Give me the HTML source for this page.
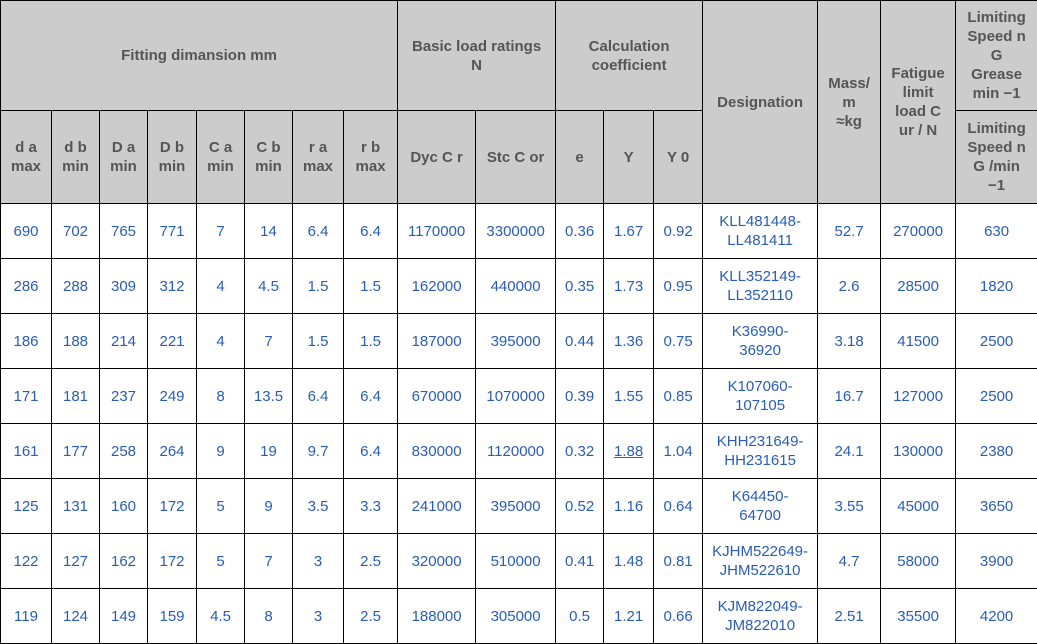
<!DOCTYPE html>
<html><head><meta charset="utf-8"><style>
body{margin:0;background:#fff;}
table{border-collapse:collapse;table-layout:fixed;width:1037px;font-family:"Liberation Sans","DejaVu Sans",sans-serif;font-size:15px;}
td,th{border:1px solid #000;text-align:center;vertical-align:middle;padding:0 1px;overflow:hidden;}
th{background:#cccccc;color:#555;font-weight:bold;line-height:19px;}
td{color:#2a5db0;height:54px;line-height:19px;}
tr.h1 th{height:109px}
tr.h2 th{height:92px}
</style></head><body>
<table>
<colgroup><col style="width:51px"><col style="width:48px"><col style="width:48px"><col style="width:49px"><col style="width:48px"><col style="width:48px"><col style="width:51px"><col style="width:54px"><col style="width:78px"><col style="width:80px"><col style="width:48px"><col style="width:50px"><col style="width:49px"><col style="width:115px"><col style="width:63px"><col style="width:75px"><col style="width:82px"></colgroup>
<tr class="h1"><th colspan="8">Fitting dimansion mm</th><th colspan="2">Basic load ratings<br>N</th><th colspan="3">Calculation<br>coefficient</th><th rowspan="2">Designation</th><th rowspan="2">Mass/<br>m<br>≈kg</th><th rowspan="2">Fatigue<br>limit<br>load C<br>ur / N</th><th>Limiting<br>Speed n<br>G<br>Grease<br>min −1</th></tr>
<tr class="h2"><th>d a<br>max</th><th>d b<br>min</th><th>D a<br>min</th><th>D b<br>min</th><th>C a<br>min</th><th>C b<br>min</th><th>r a<br>max</th><th>r b<br>max</th><th>Dyc C r</th><th>Stc C or</th><th>e</th><th>Y</th><th>Y 0</th><th>Limiting<br>Speed n<br>G /min<br>−1</th></tr>
<tr><td>690</td><td>702</td><td>765</td><td>771</td><td>7</td><td>14</td><td>6.4</td><td>6.4</td><td>1170000</td><td>3300000</td><td>0.36</td><td>1.67</td><td>0.92</td><td>KLL481448-<br>LL481411</td><td>52.7</td><td>270000</td><td>630</td></tr>
<tr><td>286</td><td>288</td><td>309</td><td>312</td><td>4</td><td>4.5</td><td>1.5</td><td>1.5</td><td>162000</td><td>440000</td><td>0.35</td><td>1.73</td><td>0.95</td><td>KLL352149-<br>LL352110</td><td>2.6</td><td>28500</td><td>1820</td></tr>
<tr><td>186</td><td>188</td><td>214</td><td>221</td><td>4</td><td>7</td><td>1.5</td><td>1.5</td><td>187000</td><td>395000</td><td>0.44</td><td>1.36</td><td>0.75</td><td>K36990-<br>36920</td><td>3.18</td><td>41500</td><td>2500</td></tr>
<tr><td>171</td><td>181</td><td>237</td><td>249</td><td>8</td><td>13.5</td><td>6.4</td><td>6.4</td><td>670000</td><td>1070000</td><td>0.39</td><td>1.55</td><td>0.85</td><td>K107060-<br>107105</td><td>16.7</td><td>127000</td><td>2500</td></tr>
<tr><td>161</td><td>177</td><td>258</td><td>264</td><td>9</td><td>19</td><td>9.7</td><td>6.4</td><td>830000</td><td>1120000</td><td>0.32</td><td><u>1.88</u></td><td>1.04</td><td>KHH231649-<br>HH231615</td><td>24.1</td><td>130000</td><td>2380</td></tr>
<tr><td>125</td><td>131</td><td>160</td><td>172</td><td>5</td><td>9</td><td>3.5</td><td>3.3</td><td>241000</td><td>395000</td><td>0.52</td><td>1.16</td><td>0.64</td><td>K64450-<br>64700</td><td>3.55</td><td>45000</td><td>3650</td></tr>
<tr><td>122</td><td>127</td><td>162</td><td>172</td><td>5</td><td>7</td><td>3</td><td>2.5</td><td>320000</td><td>510000</td><td>0.41</td><td>1.48</td><td>0.81</td><td>KJHM522649-<br>JHM522610</td><td>4.7</td><td>58000</td><td>3900</td></tr>
<tr><td>119</td><td>124</td><td>149</td><td>159</td><td>4.5</td><td>8</td><td>3</td><td>2.5</td><td>188000</td><td>305000</td><td>0.5</td><td>1.21</td><td>0.66</td><td>KJM822049-<br>JM822010</td><td>2.51</td><td>35500</td><td>4200</td></tr>
</table>
</body></html>
